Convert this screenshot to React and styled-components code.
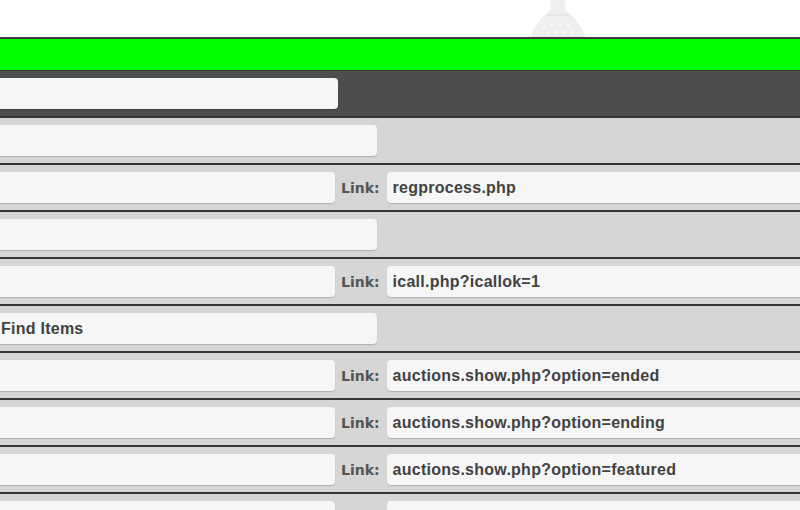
import styled, { createGlobalStyle } from 'styled-components';

const GlobalStyle = createGlobalStyle`
  html, body {
    margin: 0;
    padding: 0;
    background: #ffffff;
    overflow: hidden;
  }
  body {
    font-family: "Liberation Sans", Arial, sans-serif;
  }
`;

const Page = styled.div`
  width: 800px;
  height: 510px;
  overflow: hidden;
`;

const Top = styled.div`
  position: relative;
  height: 37px;
  background: #ffffff;
`;

const Watermark = styled.svg`
  position: absolute;
  left: 522px;
  top: 0;
`;

const GreenBar = styled.div`
  height: 31px;
  background: #00ff00;
  border-top: 2px solid #3c3c3c;
  border-bottom: 1px solid #3c3c3c;
`;

const Form = styled.div`
  margin-left: -7px;
`;

const Row = styled.div`
  display: flex;
  align-items: center;
  height: 45px;
  background: ${(p) => (p.dark ? '#4d4d4d' : '#d6d6d6')};
  border-bottom: 2px solid #383838;
`;

const Field = styled.div`
  box-sizing: border-box;
  width: ${(p) => p.w}px;
  height: 31px;
  flex: none;
  padding: 0 7px 0 ${(p) => (p.link ? 6 : 8)}px;
  display: flex;
  align-items: center;
  background: #f6f6f6;
  border-radius: 4px;
  box-shadow: 0 1px 1px rgba(0, 0, 0, 0.18);
  font-weight: bold;
  font-size: 16px;
  letter-spacing: 0.25px;
  color: #424242;
  white-space: nowrap;
  overflow: hidden;
`;

const LinkLabel = styled.span`
  flex: none;
  margin: 0 7px 0 6px;
  font-family: "DejaVu Sans", Verdana, sans-serif;
  font-weight: bold;
  font-size: 14px;
  color: #555555;
`;

const sections = [
  { type: 'section', name: '' },
  { type: 'link', name: '', link: 'regprocess.php' },
  { type: 'section', name: '' },
  { type: 'link', name: '', link: 'icall.php?icallok=1' },
  { type: 'section', name: 'Find Items' },
  { type: 'link', name: '', link: 'auctions.show.php?option=ended' },
  { type: 'link', name: '', link: 'auctions.show.php?option=ending' },
  { type: 'link', name: '', link: 'auctions.show.php?option=featured' },
  { type: 'link', name: '', link: 'auctions.show.php?option=recent' },
];

// faint chess piece watermark peeking above the green bar
const Pawn = () => (
  <Watermark width="72" height="37" viewBox="0 0 72 37">
    <path
      d="M28 0 L44 0 C43 5 42 8 45 12 C50 15 53 18 55 22 C59 26 62 31 63 37 L9 37 C10 31 13 26 17 22 C19 18 22 15 27 12 C30 8 29 5 28 0 Z"
      fill="#efefef"
    />
    <path d="M25 15 L47 15" stroke="#e6e6e6" strokeWidth="2" />
    <circle cx="22" cy="27" r="1.6" fill="#fbfbfb" />
    <circle cx="30" cy="25" r="1.6" fill="#fbfbfb" />
    <circle cx="38" cy="25" r="1.6" fill="#fbfbfb" />
    <circle cx="46" cy="26" r="1.6" fill="#fbfbfb" />
    <circle cx="26" cy="33" r="1.6" fill="#fbfbfb" />
    <circle cx="34" cy="32" r="1.6" fill="#fbfbfb" />
    <circle cx="42" cy="32" r="1.6" fill="#fbfbfb" />
    <circle cx="50" cy="33" r="1.6" fill="#fbfbfb" />
  </Watermark>
);

export default function App() {
  return (
    <Page>
      <GlobalStyle />
      <Top>
        <Pawn />
      </Top>
      <GreenBar />
      <Form>
        <Row dark>
          <Field w={345} />
        </Row>
        {sections.map((s, i) =>
          s.type === 'section' ? (
            <Row key={i}>
              <Field w={384}>{s.name}</Field>
            </Row>
          ) : (
            <Row key={i}>
              <Field w={342}>{s.name}</Field>
              <LinkLabel>Link:</LinkLabel>
              <Field w={460} link>
                {s.link}
              </Field>
            </Row>
          )
        )}
      </Form>
    </Page>
  );
}
